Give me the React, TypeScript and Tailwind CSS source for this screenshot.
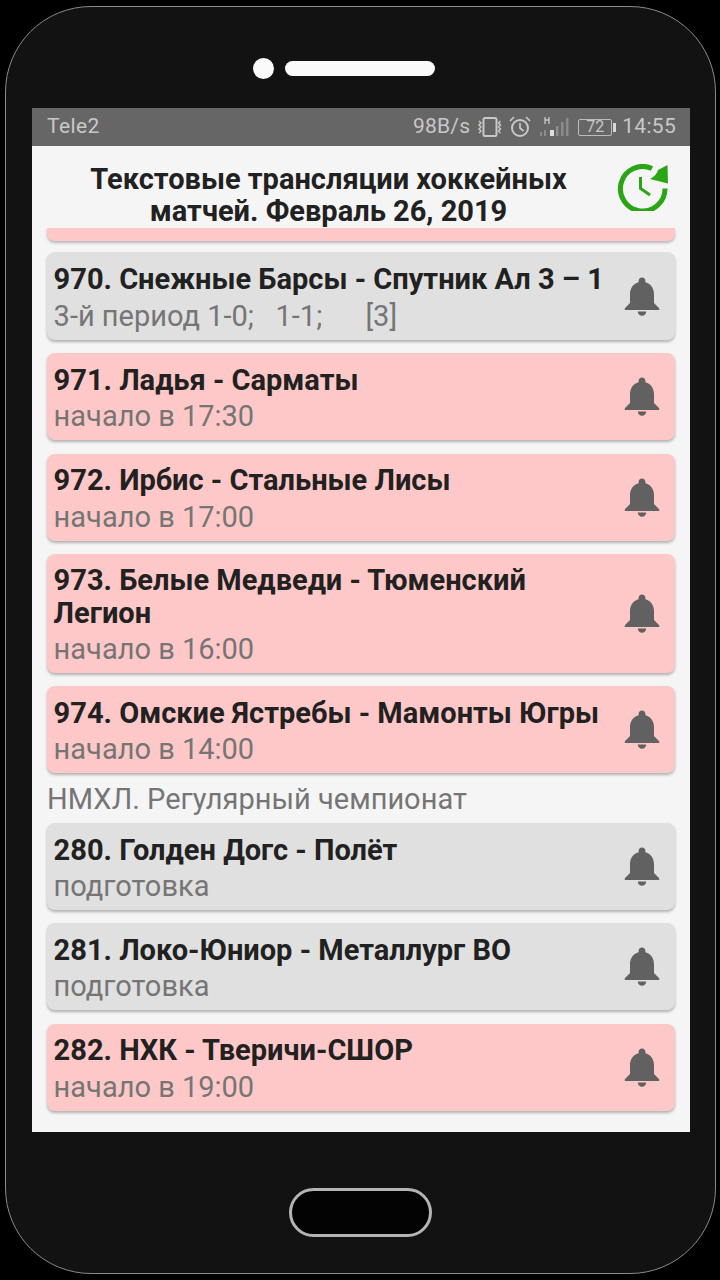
import React from "react";

function Bell() {
  return (
    <svg width="36" height="40" viewBox="0 0 36 40" className="mt-[1px] shrink-0" fill="#616161">
      <path d="M18 0.5c-2 0-3.4 1.5-3.4 3.4v1.4C8.8 6.9 6 11.800 6 17.500v8.500L0.800 31.200v1.800h34.400v-1.800L30 26v-8.500c0-5.700-2.800-10.600-8.600-12.200V3.900C21.400 2 20 0.500 18 0.500z" />
      <path d="M13.800 34.500c0 2.400 1.900 4.300 4.200 4.300s4.200-1.900 4.200-4.300z" />
    </svg>
  );
}

function Refresh() {
  return (
    <svg width="52" height="47" viewBox="0 0 52 47" fill="none">
      <path d="M48 24.500A22.300 22.300 0 1 1 35 4.500" stroke="#2aa516" strokeWidth="5" />
      <path d="M50.500 1 L51 19.500 L33 15 Q40 11 41 6 Z" fill="#2aa516" />
      <path d="M23.500 13v11.500l9.500 6.500" stroke="#2aa516" strokeWidth="3" />
    </svg>
  );
}

type Match = { title: string; sub: string; pink?: boolean; h?: string };

function Card({ title, sub, pink, h }: Match) {
  return (
    <div
      className={`flex items-center rounded-[8px] pr-[15px] pl-[7px] shadow-[0_2px_3px_rgba(0,0,0,0.28)] ${h ?? "h-[87px]"} ${pink ? "bg-[#ffc8c8]" : "bg-[#e0e0e0]"}`}
    >
      <div className="-ml-[0.4px] min-w-0 flex-1 pt-[3px]">
        <div className="text-[29px] leading-[32.500px] font-bold whitespace-pre-line text-[#212121]">{title}</div>
        <div className="mt-[4px] text-[29px] leading-[32.500px] whitespace-pre text-[#757575]">{sub}</div>
      </div>
      <Bell />
    </div>
  );
}

function StatusIcons() {
  return (
    <div className="flex items-center">
      <svg width="25" height="24" viewBox="0 0 25 24" fill="none" stroke="#c8c8c8" strokeWidth="1.500" className="ml-[7px]">
        <rect x="6.500" y="3" width="13" height="18" rx="1.500" strokeWidth="2" />
        <path d="M2 6l2 2-2 2 2 2-2 2 2 2-2 2M23.500 6l-2 2 2 2-2 2 2 2-2 2 2 2" />
      </svg>
      <svg width="24" height="24" viewBox="0 0 24 24" fill="none" stroke="#c8c8c8" strokeWidth="2" className="ml-[6px]">
        <circle cx="12" cy="13" r="8" />
        <path d="M12 8v5l3.500 3M2 6l4-4M22 6l-4-4" strokeWidth="1.700" />
      </svg>
      <svg width="30" height="24" viewBox="0 0 30 24" className="ml-[7px]">
        <path d="M6 2v7M10 2v7M6 5h4" stroke="#c8c8c8" strokeWidth="1.300" />
        <rect x="1" y="17" width="2" height="4" fill="#8c8c8c" />
        <rect x="5" y="15" width="2" height="6" fill="#8c8c8c" />
        <rect x="11" y="15" width="4" height="6" fill="#dddddd" />
        <rect x="17" y="11" width="2.500" height="10" fill="#8c8c8c" />
        <rect x="22" y="7" width="2.500" height="14" fill="#8c8c8c" />
        <rect x="27" y="3" width="2.500" height="18" fill="#8c8c8c" />
      </svg>
      <div className="ml-[9px] flex items-center">
        <div className="flex h-[17px] w-[34px] items-center justify-center rounded-[2px] border border-[#bdbdbd] text-[16px] leading-none text-[#c8c8c8]">
          72
        </div>
        <div className="ml-[1px] h-[9px] w-[3px] bg-[#d8d8d8]" />
      </div>
    </div>
  );
}

export default function App() {
  return (
    <div className="h-[1280px] w-[720px] overflow-hidden bg-black pt-[6px] pl-[5px] font-['Roboto',sans-serif]">
      <div className="flex h-[1268px] w-[711px] flex-col items-center rounded-[86px] border border-[#8a8a8a] bg-[#121212]">
        <div className="mt-[50px] mr-[33px] flex h-[22px] items-center gap-[11px]">
          <div className="h-[21px] w-[21px] rounded-full bg-[#fafafa]" />
          <div className="h-[15px] w-[150px] rounded-full bg-[#fafafa]" />
        </div>
        <div className="mt-[29px] ml-px flex h-[1024px] w-[658px] flex-col overflow-hidden bg-[#f5f5f5]">
          <div className="flex h-[38px] shrink-0 items-center justify-between bg-[#666666] pr-[14px] pl-[15px] text-[21px] text-[#c8c8c8]">
            <span className="tracking-[0.400px]">Tele2</span>
            <div className="flex items-center">
              <span className="tracking-[0.200px]">98B/s</span>
              <StatusIcons />
              <span className="ml-[6px] tracking-[0.300px]">14:55</span>
            </div>
          </div>
          <div className="flex h-[82px] shrink-0 items-center pr-[21px]">
            <div className="flex-1 pt-[16px] pr-[2px] text-center text-[29px] leading-[32.500px] font-bold text-[#212121]">
              Текстовые трансляции хоккейных
              <br />
              матчей. Февраль 26, 2019
            </div>
            <div className="mt-[1px] ml-[-10px]">
              <Refresh />
            </div>
          </div>
          <div className="flex flex-col px-[15px]">
            <div className="h-[13px] rounded-b-[8px] bg-[#ffc8c8] shadow-[0_2px_3px_rgba(0,0,0,0.25)]" />
            <div className="mt-[11px] flex flex-col gap-[13.300px]">
              <Card title="970. Снежные Барсы - Спутник Ал 3 – 1" sub="3-й период 1-0;   1-1;      [3]" h="h-[88px]" />
              <Card title="971. Ладья - Сарматы" sub="начало в 17:30" pink />
              <Card title="972. Ирбис - Стальные Лисы" sub="начало в 17:00" pink />
              <Card title={"973. Белые Медведи - Тюменский\nЛегион"} sub="начало в 16:00" pink h="h-[119px]" />
              <Card title="974. Омские Ястребы - Мамонты Югры" sub="начало в 14:00" pink />
            </div>
            <div className="mt-[10px] h-[40px] text-[29px] leading-[32px] text-[#757575]">НМХЛ. Регулярный чемпионат</div>
            <div className="flex flex-col gap-[13.300px]">
              <Card title="280. Голден Догс - Полёт" sub="подготовка" />
              <Card title="281. Локо-Юниор - Металлург ВО" sub="подготовка" />
              <Card title="282. НХК - Тверичи-СШОР" sub="начало в 19:00" pink />
            </div>
          </div>
        </div>
        <div className="mt-[56px] h-[49px] w-[143px] rounded-full border-[3px] border-[#b4b4b4] bg-[#030303]" />
      </div>
    </div>
  );
}
